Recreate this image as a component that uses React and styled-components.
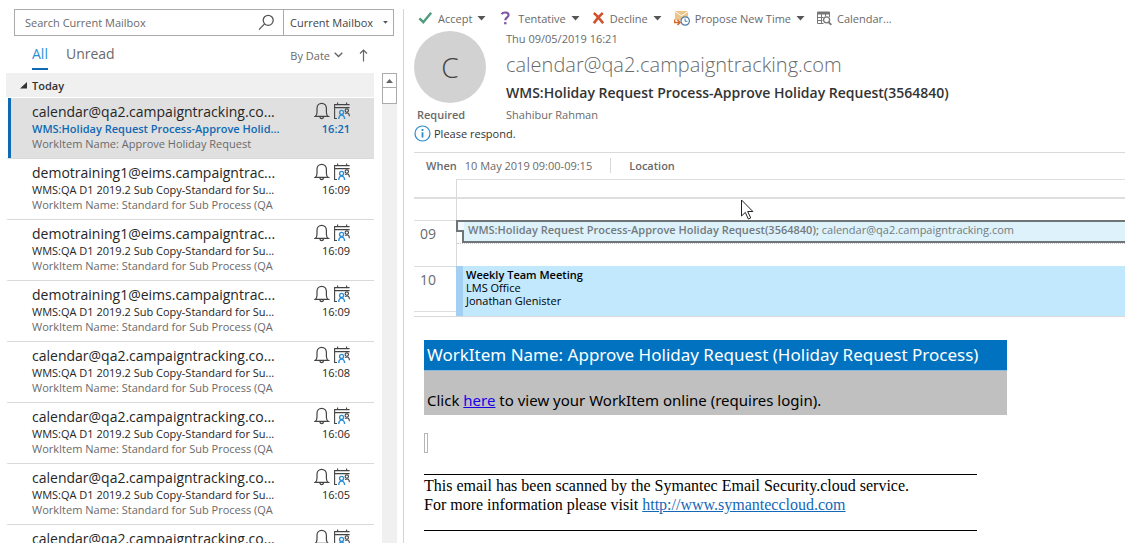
import React, {useState} from "react";
import styled, {createGlobalStyle} from "styled-components";

const COLORS = {
    accent: "#0f69b4",
    accentLight: "#2b8fd6",
    text: "#262626",
    muted: "#6a6a6a",
    line: "#d9d9d9",
    selected: "#e0e0e0",
};

const GlobalStyle = createGlobalStyle`
  * {
    box-sizing: border-box;
  }

  body {
    margin: 0;
    background: #fff;
    color: ${COLORS.text};
    font-family: "Open Sans", "Noto Sans", sans-serif;
    font-size: 11px;
  }

  button {
    border: 0;
    padding: 0;
    background: none;
    color: inherit;
    font: inherit;
    text-align: left;
    cursor: pointer;
  }
`;

const Page = styled.div`
  display: grid;
  grid-template-columns: minmax(300px, 404px) minmax(0, 1fr);
  grid-template-rows: minmax(0, 1fr);
  height: 100vh;
  padding: 9px 2px 9px 0;
`;

/* ---------- mailbox column ---------- */

const Sidebar = styled.aside`
  display: flex;
  flex-direction: column;
  min-height: 0;
  padding-left: 6px;
  border-right: 1px solid #d4d4d4;
`;

const SearchBar = styled.form`
  display: flex;
  height: 27px;
  margin: 0 9px 0 8px;
  border: 1px solid #ababab;
`;

const SearchInput = styled.input`
  flex: 1;
  min-width: 0;
  padding: 0 10px;
  border: 0;
  outline: 0;
  color: ${COLORS.muted};
  font: 11px "Open Sans", sans-serif;

  &::placeholder {
    color: ${COLORS.muted};
    opacity: 1;
  }
`;

const SearchButton = styled.button`
  display: flex;
  align-items: center;
  padding: 0 8px 0 4px;
`;

const ScopeSelect = styled.label`
  display: flex;
  align-items: center;
  width: 110px;
  padding: 0 5px 0 0;
  border-left: 1px solid #ababab;

  select {
    flex: 1;
    min-width: 0;
    padding: 0 0 0 6px;
    border: 0;
    appearance: none;
    background: none;
    color: #444;
    font: 11px "Open Sans", sans-serif;
  }
`;

const Filters = styled.div`
  display: flex;
  align-items: flex-start;
  height: 37px;
  padding: 8px 35px 0 26px;
  color: ${COLORS.muted};
`;

const Tab = styled.button`
  height: 26px;
  margin-right: 18px;
  padding-bottom: 4px;
  border-bottom: 2px solid ${({$active}) => ($active ? COLORS.accent : "transparent")};
  color: ${({$active}) => ($active ? COLORS.accentLight : COLORS.muted)};
  font-size: 14px;
  line-height: 20px;
`;

const SortButton = styled.button`
  display: flex;
  align-items: center;
  gap: 4px;
  height: 22px;
  margin-left: ${({$push}) => ($push ? "auto" : "16px")};
`;

const ListArea = styled.div`
  display: flex;
  flex: 1;
  gap: 8px;
  min-height: 0;
  padding-right: 6px;
`;

const List = styled.div`
  flex: 1;
  min-width: 0;
  overflow: hidden;
`;

const GroupHeader = styled.button`
  display: flex;
  align-items: center;
  gap: 5px;
  width: 100%;
  height: 24px;
  margin-bottom: 1px;
  padding-left: 14px;
  background: #f0f0f0;
  color: #333;
  font-weight: 600;
`;

const Item = styled.button`
  display: grid;
  grid-template-columns: minmax(0, 1fr) auto;
  align-content: start;
  width: 100%;
  height: 61px;
  padding: 4px 24px 0 24px;
  border-left: 2px solid #fff;
  border-bottom: 1px solid ${COLORS.line};
  background: ${({$selected}) => ($selected ? COLORS.selected : "#fff")};
  box-shadow: ${({$selected}) => ($selected ? `inset 3px 0 0 ${COLORS.accent}` : "none")};
  white-space: nowrap;
`;

const Sender = styled.span`
  font-size: 14px;
  line-height: 20px;
`;

const ItemIcons = styled.span`
  display: flex;
  justify-content: flex-end;
  gap: 4px;
`;

const Subject = styled.span`
  color: ${({$selected}) => ($selected ? COLORS.accent : COLORS.text)};
  font-weight: ${({$selected}) => ($selected ? 600 : 400)};
  line-height: 14px;
`;

const Time = styled(Subject)`
  text-align: right;
`;

const Preview = styled.span`
  color: ${COLORS.muted};
  line-height: 15px;
`;

const Scrollbar = styled.div`
  width: 15px;
  background: #f0f0f0;
`;

const ScrollUp = styled.button`
  display: flex;
  align-items: center;
  justify-content: center;
  width: 100%;
  height: 15px;
  border: 1px solid #ababab;
  background: #fff;
`;

const ScrollThumb = styled.div`
  height: 16px;
  border: 1px solid #ababab;
  border-top: 0;
  background: #fff;
`;

/* ---------- reading pane ---------- */

const Reader = styled.main`
  min-width: 0;
  padding-left: 10px;
`;

const Toolbar = styled.div`
  display: flex;
  align-items: center;
  gap: 12px;
  height: 18px;
  padding-left: 4px;
  color: ${COLORS.muted};
  white-space: nowrap;
`;

const Action = styled.button`
  display: flex;
  align-items: center;
  gap: 5px;
`;

const Header = styled.header`
  display: grid;
  grid-template-columns: 72px minmax(0, 1fr);
  column-gap: 20px;
  margin-top: 2px;
  color: ${COLORS.muted};
`;

const Avatar = styled.div`
  display: flex;
  align-items: center;
  justify-content: center;
  width: 72px;
  height: 72px;
  margin-top: 2px;
  border-radius: 50%;
  background: #d2d2d2;
  color: #444;
  font-size: 28px;
  font-weight: 300;
`;

const Stamp = styled.div`
  height: 20px;
  line-height: 20px;
`;

const From = styled.div`
  font-size: 20px;
  font-weight: 300;
  line-height: 32px;
`;

const Title = styled.h1`
  margin: 0;
  color: #333;
  font-size: 14px;
  font-weight: 600;
  line-height: 24px;
`;

const Label = styled.span`
  font-weight: 600;
`;

const Recipients = styled.div`
  display: grid;
  grid-template-columns: 72px minmax(0, 1fr);
  column-gap: 20px;
  height: 20px;
  color: ${COLORS.muted};
  line-height: 20px;

  ${Label} {
    padding-left: 3px;
  }
`;

const Notice = styled.div`
  display: flex;
  align-items: center;
  gap: 3px;
  height: 17px;
  color: #333;
`;

const Details = styled.div`
  display: flex;
  align-items: center;
  height: 27px;
  margin-top: 10px;
  padding: 0 0 2px 12px;
  border-top: 1px solid ${COLORS.line};
  color: ${COLORS.muted};

  span + span {
    margin-left: 8px;
  }
`;

const Place = styled.div`
  margin-left: 18px;
  padding-left: 18px;
  border-left: 1px solid ${COLORS.line};
`;

const Calendar = styled.section`
  border-bottom: 1px solid ${COLORS.line};
`;

const Slot = styled.div`
  display: grid;
  grid-template-columns: 42px minmax(0, 1fr);
  height: ${({$height}) => $height}px;
`;

const Hour = styled.div`
  height: ${({$closed}) => ($closed ? "46px" : "auto")};
  padding: 2px 0 0 6px;
  border-top: ${({$rule}) => $rule || 0}px solid #dedede;
  border-bottom: ${({$closed}) => ($closed ? 1 : 0)}px solid #dedede;
  color: ${COLORS.muted};
  font-size: 14px;
  line-height: 22px;
`;

const SlotBody = styled.div`
  border-left: 1px solid ${COLORS.line};
  border-top: ${({$rule}) => $rule || 0}px solid #dedede;
`;

const HalfHour = styled.div`
  position: relative;
  height: 24px;
  border-bottom: 1px dotted #ccc;
`;

const Request = styled.div`
  height: 23px;
  margin-left: 5px;
  padding-left: 4px;
  border: 2px solid #6f7577;
  border-right: 0;
  background: #def2fb;
  color: #737b7e;
  line-height: 15px;
  white-space: nowrap;
  overflow: hidden;

  b {
    font-weight: 600;
  }
`;

/* free/busy flag lying over the corner of the request */
const Flag = styled.div`
  position: absolute;
  top: 0;
  left: -1px;
  width: 8px;
  height: 12px;
  border: solid #6f7577;
  border-width: 2px 0 2px 2px;
  background: #f2f9fc;
`;

const Meeting = styled.div`
  padding: 2px 0 0 3px;
  border-left: 7px solid #a3cff2;
  background: #c1e8fd;
  color: #000;
  line-height: 13px;

  b {
    font-weight: 600;
  }
`;

/* ---------- mail body ---------- */

const MailBody = styled.article`
  padding: 23px 10px 0 10px;
  color: #000;
`;

const WorkItem = styled.div`
  max-width: 583px;
  background: #c0c0c0;
  font-family: "Noto Sans", sans-serif;
`;

const WorkItemTitle = styled.h2`
  margin: 0;
  padding: 0 3px;
  border-bottom: 1px solid #8fb9dc;
  background: #0072bf;
  color: #fff;
  font-size: 17px;
  font-weight: 400;
  line-height: 30px;
`;

const WorkItemText = styled.p`
  margin: 0;
  padding: 18px 3px 3px;
  font-size: 15px;
  line-height: 23px;

  a {
    color: #1a00e6;
  }
`;

const Placeholder = styled.div`
  width: 4px;
  height: 20px;
  margin: 18px 0 21px;
  border: 1px solid #b5b5b5;
`;

const Footer = styled.footer`
  max-width: 553px;
  height: 57px;
  padding-top: 1px;
  border: solid #000;
  border-width: 1px 0;
  font-family: "Liberation Serif", serif;
  font-size: 16px;
  line-height: 19px;

  p {
    margin: 0;
  }

  a {
    color: #1468b8;
  }
`;

/* mouse pointer, floats over everything */
const Pointer = styled.svg`
  position: absolute;
  top: 199px;
  left: 740px;
`;

/* ---------- icons ---------- */

const Caret = ({size = 9, color = "#555"}) => (
    <svg width={size} height={Math.ceil(size / 2)} viewBox="0 0 8 5" aria-hidden="true">
        <path d="M0 0h8L4 4.6z" fill={color}/>
    </svg>
);

const SearchIcon = () => (
    <svg width="17" height="17" viewBox="0 0 17 17" fill="none" stroke="#555" strokeWidth="1.3">
        <circle cx="10.2" cy="6.3" r="5"/>
        <path d="M6.6 9.9L1 15.6"/>
    </svg>
);

const BellIcon = () => (
    <svg width="16" height="18" viewBox="0 0 16 18" fill="none" stroke="#444" strokeWidth="1.2">
        <path d="M1 14.4h13.4c-1.4-1-2-2-2-4V6.2c0-2.9-2-4.9-4.7-4.9S3 3.3 3 6.2v4.2c0 2-.6 3-2 4z"/>
        <path d="M5.8 14.6c.2 1.4 1 2 1.9 2s1.7-.6 1.9-2"/>
    </svg>
);

const MeetingIcon = () => (
    <svg width="16" height="18" viewBox="0 0 16 18" fill="none" stroke="#444" strokeWidth="1.1">
        <path d="M3 16.5H.6V2.6h15M.6 5.6h15M3.6 .6v2M12.6 .6v2"/>
        <circle cx="12.8" cy="8.6" r="1.7"/>
        <path d="M11.2 11.6c2.2-1.4 4.2-.4 4.2 2.6"/>
        <g stroke={COLORS.accentLight} strokeWidth="1.4">
            <circle cx="7.6" cy="10.4" r="2"/>
            <path d="M4.8 17c0-5.2 5.8-5.2 5.8 0"/>
        </g>
    </svg>
);

const AcceptIcon = () => (
    <svg width="15" height="14" viewBox="0 0 16 14" fill="none" stroke="#4f9c7f" strokeWidth="2.6">
        <path d="M1.5 7.3l4.2 4.2L14 1.5"/>
    </svg>
);

const TentativeIcon = () => (
    <svg width="15" height="14" viewBox="0 0 15 14" fill="none" stroke="#7e57a8" strokeWidth="2.2">
        <path d="M3.6 3.3C5 .8 10.6.8 10.6 4c0 2.4-3.3 2.2-3.3 5.3"/>
        <path d="M6.1 12.2h2.4"/>
    </svg>
);

const DeclineIcon = () => (
    <svg width="13" height="14" viewBox="0 0 14 14" fill="none" stroke="#d2512a" strokeWidth="2.8">
        <path d="M2 1.5C5 4 8.5 8 12 12.6M11.6 1.5C8.5 4 5 8 2 12.6"/>
    </svg>
);

const ProposeIcon = () => (
    <svg width="16" height="16" viewBox="0 0 16 16" fill="none">
        <path d="M1 1h13v9H1z" fill="#edc588"/>
        <path d="M1 1.5l6.5 4.3L14 1.5" stroke="#fff"/>
        <path d="M.5 9.5v3h5M3.5 9.8l2.6 2.6L3.5 15" stroke="#d9662b" strokeWidth="1.5"/>
        <circle cx="11.2" cy="11" r="4.2" fill="#fff" stroke="#4e7ba8" strokeWidth="1.2"/>
        <path d="M11.1 8.5v2.8h2.3" stroke="#4e7ba8"/>
    </svg>
);

const CalendarIcon = () => (
    <svg width="15" height="15" viewBox="0 0 15 15" fill="none" stroke="#777">
        <path d="M.5 1h12v2H.5z" fill="#777"/>
        <path d="M12.5 3v3M.5 3v9.5h6M4.5 3v9M8.5 3v2.5M.5 6.5h6M.5 9.5h5"/>
        <circle cx="9.6" cy="8.8" r="3" strokeWidth="1.3" fill="#fff"/>
        <path d="M11.5 11l2.8 2.8" strokeWidth="1.8"/>
    </svg>
);

const InfoIcon = () => (
    <svg width="17" height="17" viewBox="0 0 17 17" fill="none" stroke="#2b8cc9">
        <circle cx="8.5" cy="8.5" r="7.5" strokeWidth="1.2"/>
        <path d="M8.5 7.3v5.2M8.5 4v2" strokeWidth="1.8"/>
    </svg>
);

/* ---------- data ---------- */

const qaSubject = "WMS:QA D1 2019.2 Sub Copy-Standard for Su...";
const qaPreview = "WorkItem Name: Standard for Sub Process (QA";
const calendarSender = "calendar@qa2.campaigntracking.co...";
const demoSender = "demotraining1@eims.campaigntrac...";

const mails = [
    {
        sender: calendarSender,
        subject: "WMS:Holiday Request Process-Approve Holid...",
        preview: "WorkItem Name: Approve Holiday Request",
        time: "16:21"
    },
    {sender: demoSender, subject: qaSubject, preview: qaPreview, time: "16:09"},
    {sender: demoSender, subject: qaSubject, preview: qaPreview, time: "16:09"},
    {sender: demoSender, subject: qaSubject, preview: qaPreview, time: "16:09"},
    {sender: calendarSender, subject: qaSubject, preview: qaPreview, time: "16:08"},
    {sender: calendarSender, subject: qaSubject, preview: qaPreview, time: "16:06"},
    {sender: calendarSender, subject: qaSubject, preview: qaPreview, time: "16:05"},
    {sender: calendarSender},
];

const actions = [
    {label: "Accept", icon: <AcceptIcon/>, menu: true},
    {label: "Tentative", icon: <TentativeIcon/>, menu: true},
    {label: "Decline", icon: <DeclineIcon/>, menu: true},
    {label: "Propose New Time", icon: <ProposeIcon/>, menu: true},
    {label: "Calendar...", icon: <CalendarIcon/>},
];

const Mailbox = () => {
    const [tab, setTab] = useState("All");
    const [selected, setSelected] = useState(0);

    return (
        <Sidebar>
            <SearchBar onSubmit={(e) => e.preventDefault()}>
                <SearchInput type="text" placeholder="Search Current Mailbox" aria-label="Search Current Mailbox"/>
                <SearchButton type="submit" aria-label="Search"><SearchIcon/></SearchButton>
                <ScopeSelect>
                    <select aria-label="Search scope">
                        <option>Current Mailbox</option>
                    </select>
                    <Caret size={5}/>
                </ScopeSelect>
            </SearchBar>
            <Filters>
                {["All", "Unread"].map((name) => (
                    <Tab key={name} $active={tab === name} onClick={() => setTab(name)}>{name}</Tab>
                ))}
                <SortButton $push>
                    By Date
                    <svg width="9" height="6" viewBox="0 0 9 6" fill="none" stroke="#666" strokeWidth="1.4">
                        <path d="M.7.8l3.8 3.8L8.3.8"/>
                    </svg>
                </SortButton>
                <SortButton aria-label="Reverse order">
                    <svg width="9" height="13" viewBox="0 0 9 13" fill="none" stroke="#666" strokeWidth="1.2">
                        <path d="M4.5 12.5V1M1 4.5L4.5 1 8 4.5"/>
                    </svg>
                </SortButton>
            </Filters>
            <ListArea>
                <List>
                    <GroupHeader>
                        <svg width="7" height="7" viewBox="0 0 7 7"><path d="M7 0v6.5H0z" fill="#333"/></svg>
                        Today
                    </GroupHeader>
                    {mails.map((mail, index) => (
                        <Item key={index} $selected={selected === index} onClick={() => setSelected(index)}>
                            <Sender>{mail.sender}</Sender>
                            <ItemIcons><BellIcon/><MeetingIcon/></ItemIcons>
                            <Subject $selected={selected === index}>{mail.subject}</Subject>
                            <Time $selected={selected === index}>{mail.time}</Time>
                            <Preview>{mail.preview}</Preview>
                        </Item>
                    ))}
                </List>
                <Scrollbar>
                    <ScrollUp aria-label="Scroll up">
                        <svg width="7" height="4" viewBox="0 0 7 4"><path d="M0 4h7L3.5 0z" fill="#666"/></svg>
                    </ScrollUp>
                    <ScrollThumb/>
                </Scrollbar>
            </ListArea>
        </Sidebar>
    );
};

const DayPreview = () => (
    <Calendar>
        <Slot $height={18}>
            <Hour/>
            <SlotBody $rule={1}/>
        </Slot>
        <Slot $height={23}>
            <Hour $rule={2}/>
            <SlotBody $rule={2}/>
        </Slot>
        <Slot $height={46}>
            <Hour $rule={1}>09</Hour>
            <SlotBody>
                <HalfHour>
                    <Request>
                        <b>WMS:Holiday Request Process-Approve Holiday Request(3564840);</b> calendar@qa2.campaigntracking.com
                    </Request>
                    <Flag/>
                </HalfHour>
            </SlotBody>
        </Slot>
        <Slot $height={50}>
            <Hour $rule={1} $closed>10</Hour>
            <Meeting>
                <b>Weekly Team Meeting</b><br/>
                LMS Office<br/>
                Jonathan Glenister
            </Meeting>
        </Slot>
    </Calendar>
);

const App = () => (
    <>
        <GlobalStyle/>
        <Page>
            <Mailbox/>
            <Reader>
                <Toolbar>
                    {actions.map(({label, icon, menu}) => (
                        <Action key={label}>
                            {icon}
                            {label}
                            {menu && <Caret/>}
                        </Action>
                    ))}
                </Toolbar>
                <Header>
                    <Avatar>C</Avatar>
                    <div>
                        <Stamp>Thu 09/05/2019 16:21</Stamp>
                        <From>calendar@qa2.campaigntracking.com</From>
                        <Title>WMS:Holiday Request Process-Approve Holiday Request(3564840)</Title>
                    </div>
                </Header>
                <Recipients>
                    <Label>Required</Label>
                    <span>Shahibur Rahman</span>
                </Recipients>
                <Notice><InfoIcon/>Please respond.</Notice>
                <Details>
                    <Label>When</Label>
                    <span>10 May 2019 09:00-09:15</span>
                    <Place><Label>Location</Label></Place>
                </Details>
                <DayPreview/>
                <MailBody>
                    <WorkItem>
                        <WorkItemTitle>WorkItem Name: Approve Holiday Request (Holiday Request Process)</WorkItemTitle>
                        <WorkItemText>
                            Click <a href="#workitem">here</a> to view your WorkItem online (requires login).
                        </WorkItemText>
                    </WorkItem>
                    <Placeholder/>
                    <Footer>
                        <p>This email has been scanned by the Symantec Email Security.cloud service.</p>
                        <p>For more information please visit <a href="http://www.symanteccloud.com">http://www.symanteccloud.com</a></p>
                    </Footer>
                </MailBody>
            </Reader>
        </Page>
        <Pointer width="14" height="22" viewBox="0 0 14 22">
            <path d="M1.5 1v16l3.8-3.6 3 6.6 2.4-1.1-3-6.4h5.2z" fill="#fff" stroke="#222"/>
        </Pointer>
    </>
);

export default App;
